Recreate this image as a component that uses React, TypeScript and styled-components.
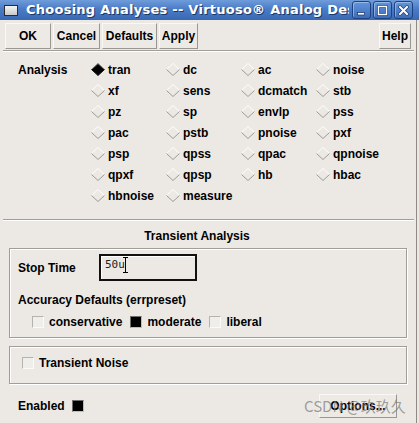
import React from "react";
import styled, { createGlobalStyle } from "styled-components";

const Global = createGlobalStyle`
  html, body { margin: 0; padding: 0; background: #ece9e4; }
  body { font-family: "Liberation Sans", Arial, sans-serif; }
`;

const Window = styled.div`
  position: relative;
  width: 419px;
  height: 423px;
  overflow: hidden;
  display: flex;
  flex-direction: column;
  background: #ece9e4;
  font: bold 12px/14px "Liberation Sans", Arial, sans-serif;
  color: #000;
`;

const TitleBar = styled.div`
  flex: none;
  height: 20px;
  display: flex;
  align-items: center;
  padding: 0 6px 0 4px;
  background: linear-gradient(#6f9cda, #4a7bc7 45%, #3a69b4);
`;

const TitleIcon = styled.div`
  width: 12px;
  height: 9px;
  border: 1px solid #2b2b2b;
  background: linear-gradient(#f4f4f4, #c9c9c9);
  margin-right: 8px;
`;

const TitleText = styled.div`
  flex: 1;
  min-width: 0;
  overflow: hidden;
  white-space: nowrap;
  color: #fff;
  font: bold 13px/20px "DejaVu Sans", sans-serif;
  letter-spacing: 0.25px;
  text-shadow: 1px 1px 0 #1d3866;
  margin-right: 3px;
`;

const WinButtons = styled.div`
  display: flex;
  gap: 2px;
`;

const WinBtn = styled.div`
  width: 17px;
  height: 16px;
  border: 1px solid #1e427d;
  border-radius: 3px;
  background: linear-gradient(#6394da, #3d6dba);
  box-shadow: inset 1px 1px 0 rgba(255, 255, 255, 0.35);
  display: flex;
  align-items: center;
  justify-content: center;
`;

const Body = styled.div`
  flex: 1;
  display: flex;
`;

const Main = styled.div`
  flex: 1;
  display: flex;
  flex-direction: column;
`;

const Edge = styled.div`
  width: 2px;
  border-left: 1px solid #8e8b86;
  background: #ece9e4;
`;

const Toolbar = styled.div`
  display: flex;
  gap: 2px;
  padding: 3px 5px 0 5px;
`;

const Button = styled.div<{ $w: number; $h?: number; $push?: boolean }>`
  box-sizing: border-box;
  width: ${(p) => p.$w}px;
  height: ${(p) => p.$h ?? 26}px;
  margin-left: ${(p) => (p.$push ? "auto" : "0")};
  display: flex;
  align-items: center;
  justify-content: center;
  background: #edeae5;
  border: 1px solid;
  border-color: #f9f8f6 #9a9792 #9a9792 #f9f8f6;
  white-space: nowrap;
`;

const Separator = styled.div`
  height: 0;
  border-top: 1px solid #a19e99;
  border-bottom: 1px solid #fff;
  margin: ${(p: { $top: number }) => p.$top}px 2px 0 3px;
`;

const AnalysisGrid = styled.div`
  display: grid;
  grid-template-columns: 73px repeat(4, 75px);
  grid-auto-rows: 21px;
  padding-left: 18px;
  margin-top: 7px;
  align-items: center;
`;

const Label = styled.div`
  white-space: nowrap;
`;

const Radio = styled.div`
  display: flex;
  align-items: center;
  gap: 3px;
  white-space: nowrap;
`;

const SectionTitle = styled.div`
  text-align: center;
  margin: 8px 22px 0 0;
  line-height: 14px;
`;

const Frame = styled.div<{ $top: number; $pad: string }>`
  margin: ${(p) => p.$top}px 9px 0 9px;
  padding: ${(p) => p.$pad};
  border: 1px solid #a19e99;
  box-shadow: inset 1px 1px 0 #fff, 1px 1px 0 #fff;
`;

const StopRow = styled.div`
  display: flex;
  align-items: center;
  height: 27px;
`;

const StopLabel = styled.div`
  width: 81px;
`;

const InputBox = styled.div`
  position: relative;
  box-sizing: border-box;
  width: 98px;
  height: 27px;
  border: 2px solid #111;
  box-shadow: inset 1px 1px 0 #fff;
  padding: 2px 0 0 4px;
  font: 11px/14px "DejaVu Sans Mono", monospace;
  color: #222;
`;

const IBeam = styled.div`
  position: absolute;
  left: 22px;
  top: 1px;
  width: 5px;
  height: 16px;
`;

const SubLabel = styled.div`
  margin-top: 12px;
`;

const CheckRow = styled.div<{ $top: number; $left: number }>`
  display: flex;
  align-items: center;
  height: 14px;
  margin-top: ${(p) => p.$top}px;
  padding-left: ${(p) => p.$left}px;
  gap: 8px;
`;

const CheckItem = styled.div`
  display: flex;
  align-items: center;
  gap: 5px;
  white-space: nowrap;
`;

const Box = styled.div<{ $on?: boolean }>`
  box-sizing: border-box;
  width: 12px;
  height: 12px;
  border: 1px solid;
  border-color: ${(p) => (p.$on ? "#6e6e6e #bdbdbd #bdbdbd #6e6e6e" : "#b6b3ae #fbfaf8 #fbfaf8 #b6b3ae")};
  background: ${(p) => (p.$on ? "#000" : "#f0eeea")};
`;

const BottomRow = styled.div`
  display: flex;
  align-items: center;
  height: 24px;
  margin-top: 10px;
  padding: 0 19px 0 18px;
`;

const EnabledLabel = styled.div`
  margin-right: 7px;
`;

const Watermark = styled.div`
  position: absolute;
  left: 304px;
  top: 398px;
  font: 15px/16px "Noto Sans CJK SC", "Noto Sans", sans-serif;
  color: rgba(120, 120, 120, 0.7);
  white-space: nowrap;
  pointer-events: none;
`;

const Diamond = ({ on }: { on?: boolean }) => (
  <svg width="14" height="13" viewBox="0 0 14 13">
    <polygon points="7,0.5 13.5,6.5 7,12.5 0.5,6.5" fill={on ? "#000" : "none"} />
    <polyline points="0.5,6.5 7,0.5 13.5,6.5" fill="none" stroke={on ? "#7a7a7a" : "#fdfdfc"} strokeWidth="1" />
    <polyline points="0.5,6.5 7,12.5 13.5,6.5" fill="none" stroke={on ? "#111" : "#9c9a96"} strokeWidth="1" />
  </svg>
);

const rows: string[][] = [
  ["tran", "dc", "ac", "noise"],
  ["xf", "sens", "dcmatch", "stb"],
  ["pz", "sp", "envlp", "pss"],
  ["pac", "pstb", "pnoise", "pxf"],
  ["psp", "qpss", "qpac", "qpnoise"],
  ["qpxf", "qpsp", "hb", "hbac"],
  ["hbnoise", "measure"],
];

export default function App() {
  return (
    <Window>
      <Global />
      <TitleBar>
        <TitleIcon />
        <TitleText>Choosing Analyses -- Virtuoso® Analog Design Environment (1)</TitleText>
        <WinButtons>
          <WinBtn>
            <svg width="11" height="11" viewBox="0 0 11 11">
              <rect x="1.5" y="7.5" width="7" height="2.5" fill="#fff" stroke="#1e3f75" strokeWidth="0.8" />
            </svg>
          </WinBtn>
          <WinBtn>
            <svg width="11" height="11" viewBox="0 0 11 11">
              <rect x="1.5" y="1.5" width="8" height="8" fill="none" stroke="#1e3f75" strokeWidth="2.6" />
              <rect x="1.5" y="1.5" width="8" height="8" fill="none" stroke="#fff" strokeWidth="1.4" />
            </svg>
          </WinBtn>
          <WinBtn>
            <svg width="11" height="11" viewBox="0 0 11 11">
              <path d="M2 2 L9 9 M9 2 L2 9" stroke="#1e3f75" strokeWidth="3.4" strokeLinecap="square" />
              <path d="M2 2 L9 9 M9 2 L2 9" stroke="#fff" strokeWidth="2" strokeLinecap="square" />
            </svg>
          </WinBtn>
        </WinButtons>
      </TitleBar>
      <Body>
        <Main>
          <Toolbar>
            <Button $w={46}>OK</Button>
            <Button $w={47}>Cancel</Button>
            <Button $w={55}>Defaults</Button>
            <Button $w={39}>Apply</Button>
            <Button $w={32} $push>Help</Button>
          </Toolbar>
          <Separator $top={1} />
          <AnalysisGrid>
            {rows.map((r, i) => (
              <React.Fragment key={i}>
                <Label>{i === 0 ? "Analysis" : ""}</Label>
                {r.map((name) => (
                  <Radio key={name}>
                    <Diamond on={name === "tran"} />
                    {name}
                  </Radio>
                ))}
                {r.length < 4 && Array.from({ length: 4 - r.length }).map((_, k) => <div key={"e" + k} />)}
              </React.Fragment>
            ))}
          </AnalysisGrid>
          <Separator $top={13} />
          <SectionTitle>Transient Analysis</SectionTitle>
          <Frame $top={5} $pad="5px 8px 8px 8px">
            <StopRow>
              <StopLabel>Stop Time</StopLabel>
              <InputBox>
                50u
                <IBeam>
                  <svg width="5" height="16" viewBox="0 0 5 16">
                    <path d="M0 0.5 H5 M2.5 0.5 V15.5 M0 15.5 H5" stroke="#000" strokeWidth="1" fill="none" />
                  </svg>
                </IBeam>
              </InputBox>
            </StopRow>
            <SubLabel>Accuracy Defaults (errpreset)</SubLabel>
            <CheckRow $top={8} $left={14}>
              <CheckItem>
                <Box />
                conservative
              </CheckItem>
              <CheckItem>
                <Box $on />
                moderate
              </CheckItem>
              <CheckItem>
                <Box />
                liberal
              </CheckItem>
            </CheckRow>
          </Frame>
          <Frame $top={8} $pad="9px 12px 13px 12px">
            <CheckRow $top={0} $left={0}>
              <CheckItem>
                <Box />
                Transient Noise
              </CheckItem>
            </CheckRow>
          </Frame>
          <BottomRow>
            <EnabledLabel>Enabled</EnabledLabel>
            <Box $on />
            <Button $w={78} $h={24} $push>Options...</Button>
          </BottomRow>
        </Main>
        <Edge />
      </Body>
      <Watermark>CSDN @玖玖久</Watermark>
    </Window>
  );
}
